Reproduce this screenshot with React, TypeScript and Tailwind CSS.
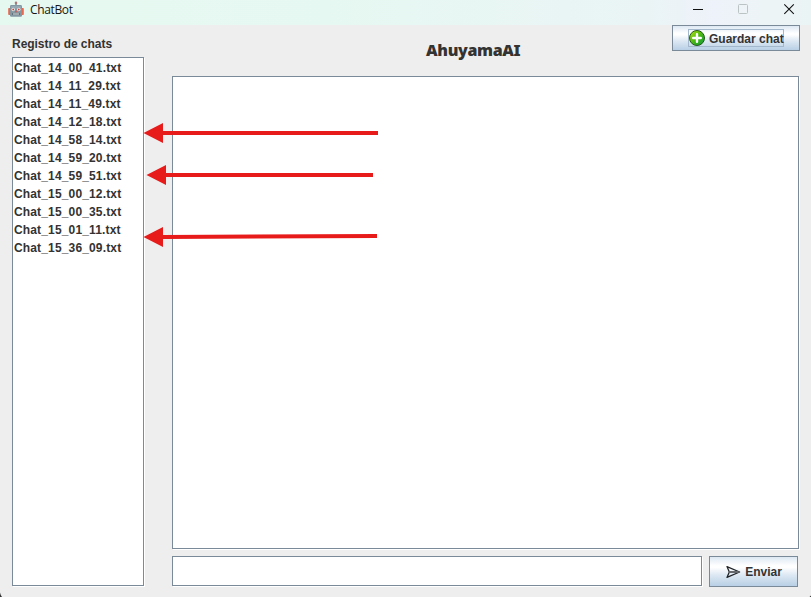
import React from 'react';

const chats = [
  'Chat_14_00_41.txt',
  'Chat_14_11_29.txt',
  'Chat_14_11_49.txt',
  'Chat_14_12_18.txt',
  'Chat_14_58_14.txt',
  'Chat_14_59_20.txt',
  'Chat_14_59_51.txt',
  'Chat_15_00_12.txt',
  'Chat_15_00_35.txt',
  'Chat_15_01_11.txt',
  'Chat_15_36_09.txt',
];

const panel = 'border border-[#7a8a99] bg-white shadow-[1px_1px_0_#fff]';
const button =
  'flex items-center justify-center border border-[#7a8a99] bg-[linear-gradient(#dde8f3_0%,#ffffff_30%,#ffffff_36%,#dde8f3_62%,#b8cfe5_100%)] font-bold';

function RobotIcon() {
  return (
    <svg className="h-4 w-4" viewBox="0 0 16 16">
      <path d="M8 3V5" stroke="#7f909a" strokeWidth="1.6" />
      <circle cx="8" cy="1.9" r="1.3" fill="#a9787a" />
      <rect x="0.2" y="7" width="2.4" height="7" rx="0.8" fill="#e8694f" />
      <rect x="13.4" y="7" width="2.4" height="7" rx="0.8" fill="#e8694f" />
      <rect x="2" y="4" width="12" height="11.8" rx="1.4" fill="#8397a3" />
      <rect x="3" y="5" width="10" height="2.4" rx="1" fill="#93a8b3" />
      <circle cx="5.2" cy="8.5" r="1.7" fill="#f0f2f2" />
      <circle cx="10.8" cy="8.5" r="1.7" fill="#f0f2f2" />
      <circle cx="5.2" cy="8.5" r="0.9" fill="#c8443c" />
      <circle cx="10.8" cy="8.5" r="0.9" fill="#c8443c" />
      <path d="M8 9l1.2 2.2H6.8z" fill="#d9544d" />
      <rect x="4.2" y="12" width="7.6" height="2" rx="0.5" fill="#59676f" />
      <path d="M5 13h6" stroke="#e8eced" strokeWidth="1" />
    </svg>
  );
}

function PlusIcon() {
  return (
    <svg className="h-4 w-4 shrink-0" viewBox="0 0 16 16">
      <defs>
        <linearGradient id="green" x1="0" y1="0" x2="1" y2="1">
          <stop offset="0.1" stopColor="#a4dc10" />
          <stop offset="0.5" stopColor="#4cb816" />
          <stop offset="1" stopColor="#079b3b" />
        </linearGradient>
      </defs>
      <circle cx="8" cy="8" r="7.5" fill="url(#green)" stroke="#24591b" />
      <path d="M8 4.2v7.6M4.2 8h7.6" stroke="#fff" strokeWidth="2.4" strokeLinecap="round" />
    </svg>
  );
}

function SendIcon() {
  return (
    <svg className="h-4 w-4" viewBox="0 0 16 16" fill="none" stroke="#202326" strokeLinejoin="round">
      <path d="M2 2.6L14.6 8 2 13.4 4.3 8z" strokeWidth="1.3" />
      <path d="M4.3 8h9.4" strokeWidth="2" stroke="#66696d" />
    </svg>
  );
}

function TitleBar() {
  return (
    <header className="flex h-[25px] shrink-0 items-start bg-[linear-gradient(90deg,#e6f9f0_0%,#e6f8f2_40%,#eaf4f5_80%,#eef2fa_88%,#edf4f6_94%,#ebf4f5_100%)] pl-2">
      <div className="mt-px"><RobotIcon /></div>
      <span className="ml-1.5 mt-[2px] font-['Open_Sans','Noto_Sans',sans-serif] text-[12px] leading-4 tracking-[-0.35px] text-[#161616]">
        ChatBot
      </span>
      <svg className="ml-auto mr-4 h-[18px] w-[103px]" viewBox="0 0 103 18" fill="none">
        <path d="M1 9.5h10" stroke="#111" />
        <rect x="46.5" y="4.5" width="9" height="9" rx="1" stroke="#bcc3c5" />
        <path d="M92.3 4.3l9.5 9.5M101.8 4.3l-9.5 9.5" stroke="#111" strokeWidth="1.1" />
      </svg>
    </header>
  );
}

function Arrows() {
  return (
    <svg className="pointer-events-none absolute inset-0 h-full w-full" viewBox="0 0 811 597" fill="#e81b1b">
      <path d="M143.5 133L163 123v8h215v4H163v8z" />
      <path d="M146.5 175L166 165v8h207v4H166v8z" />
      <path d="M143.5 237L163 227v8l214-1v4l-214 1v8z" />
      <path d="M0 592.5Q0.6 595.5 2 597H0z" fill="#333" />
      <path d="M811 595.5V597h-1.5z" fill="#333" />
    </svg>
  );
}

export default function App() {
  return (
    <div className="relative flex h-[597px] w-[811px] flex-col overflow-hidden bg-[#eeeeee] font-['Liberation_Sans',Arial,sans-serif] text-[12px] text-[#333333]">
      <TitleBar />
      <div className="flex min-h-0 flex-1 pl-3">
        <aside className="mb-[11px] flex w-[132px] flex-col">
          <h2 className="h-8 pt-[11px] text-[12px] font-bold leading-4 tracking-[-0.04px]">Registro de chats</h2>
          <ul className={`min-h-0 flex-1 pl-px pt-px ${panel}`}>
            {chats.map((chat) => (
              <li key={chat} className="h-[18px] whitespace-nowrap font-bold leading-[18px] tracking-[0.15px]">
                {chat}
              </li>
            ))}
          </ul>
        </aside>
        <main className="mb-2.5 ml-7 flex w-[628px] flex-col">
          <div className="flex h-[51px] shrink-0 items-start">
            <h1 className="ml-[254px] mt-[14px] whitespace-nowrap font-['Noto_Sans','Open_Sans',sans-serif] text-[16px] font-black leading-[22px] tracking-[-0.35px]">
              AhuyamaAI
            </h1>
            <button className={`ml-auto h-[26px] w-[128px] ${button}`}>
              <span className="flex h-[18px] w-[96px] items-center gap-1 whitespace-nowrap border border-[#a3b8cc]">
                <PlusIcon />
                <span className="pt-px">Guardar chat</span>
              </span>
            </button>
          </div>
          <div className={`mr-px min-h-0 flex-1 ${panel}`} />
          <div className="mt-[7px] flex h-[31px] shrink-0">
            <input className={`h-[30px] w-[530px] outline-none ${panel}`} />
            <button className={`ml-[7px] h-[31px] w-[89px] gap-1 ${button}`}>
              <SendIcon />
              Enviar
            </button>
          </div>
        </main>
      </div>
      <Arrows />
    </div>
  );
}
